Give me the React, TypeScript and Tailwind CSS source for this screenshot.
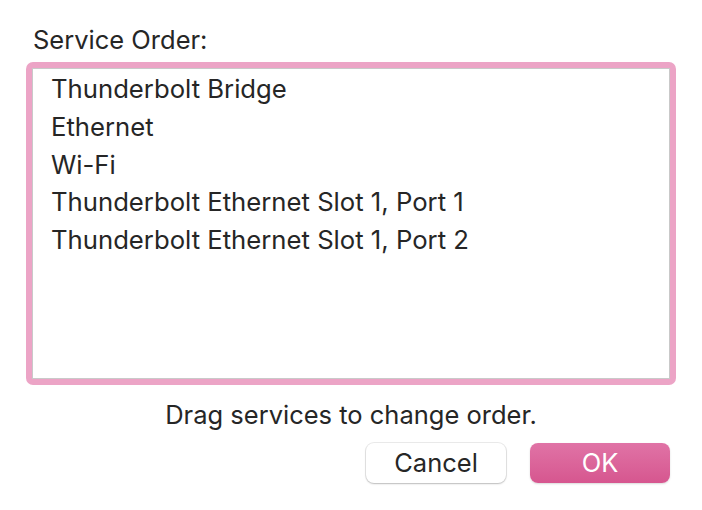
import React from 'react';

const services = [
  'Thunderbolt Bridge',
  'Ethernet',
  'Wi-Fi',
  'Thunderbolt Ethernet Slot 1, Port 1',
  'Thunderbolt Ethernet Slot 1, Port 2',
];

export default function App() {
  return (
    <div
      className="w-[702px] h-[510px] bg-white px-[26px] pt-[22px] text-[#262626]"
      style={{ fontFamily: 'Inter, "Liberation Sans", sans-serif' }}
    >
      {/* Label */}
      <div className="pl-[7px] text-[25.5px] leading-[36px]">Service Order:</div>

      {/* Service list with focus ring */}
      <div className="mt-[4px] h-[323px] rounded-[7px] bg-[#eca4c6] p-[6px]">
        <div className="h-full border border-[#c9c9c9] bg-white pl-[18px] pt-[1px]">
          {services.map((s) => (
            <div key={s} className="text-[25.7px] leading-[37.75px] whitespace-nowrap">
              {s}
            </div>
          ))}
        </div>
      </div>

      <p className="mt-[14px] text-center text-[25.5px] leading-[32px]">
        Drag services to change order.
      </p>

      {/* Buttons */}
      <div className="mt-[12px] flex justify-end gap-[24px] pr-[6px]">
        <button className="h-[40px] w-[140px] rounded-[8px] bg-white text-[25.5px] shadow-[0_0_0_1px_rgba(0,0,0,0.08),0_1px_2px_rgba(0,0,0,0.2)]">
          Cancel
        </button>
        <button className="h-[40px] w-[140px] rounded-[8px] bg-gradient-to-b from-[#e073a6] to-[#d6568f] text-[25.5px] text-white shadow-[0_1px_2px_rgba(0,0,0,0.15)]">
          OK
        </button>
      </div>
    </div>
  );
}
